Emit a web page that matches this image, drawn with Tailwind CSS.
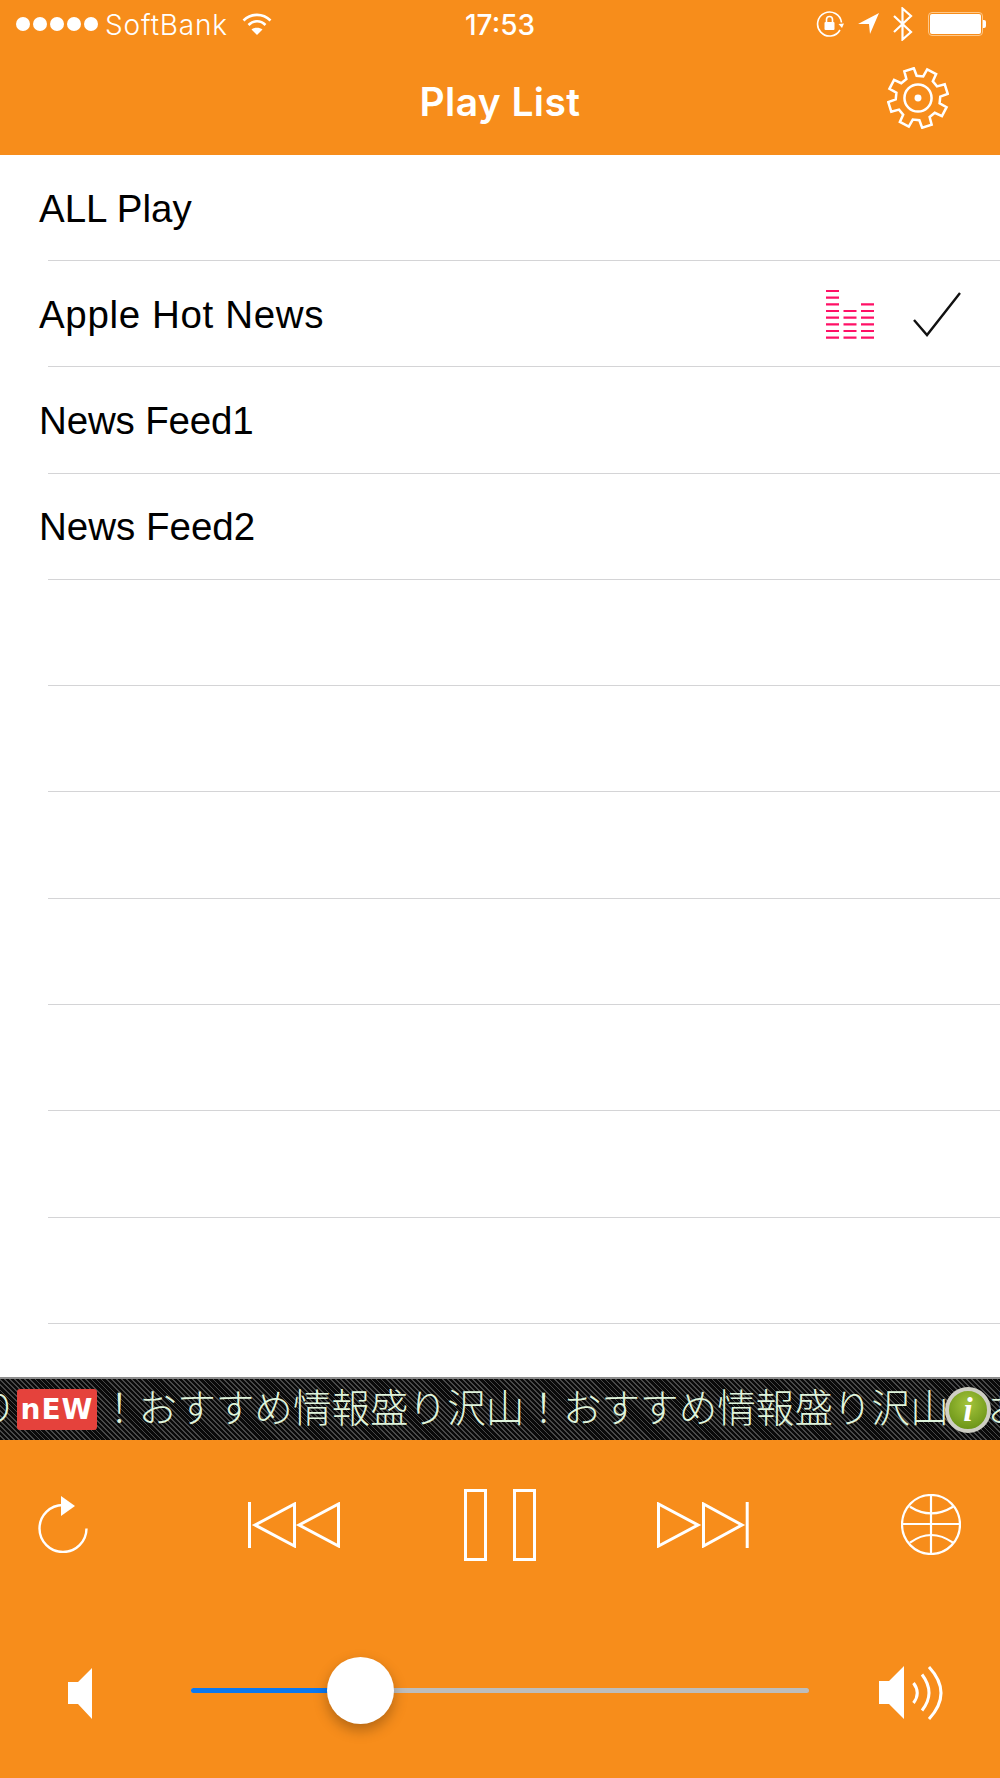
<!DOCTYPE html>
<html>
<head>
<meta charset="utf-8">
<script src="https://cdn.jsdelivr.net/npm/@tailwindcss/browser@4"></script>
</head>
<body class="bg-white">
<div class="w-[1000px] h-[1778px] flex flex-col overflow-hidden font-['Liberation_Sans','Noto_Sans_CJK_JP',sans-serif] text-black">
  <header class="bg-[#f78d1b] h-[155px] shrink-0 text-white flex flex-col">
    <div class="h-[48px] flex items-center relative">
      <div class="flex gap-[3px] ml-[16px]">
        <span class="w-[14px] h-[14px] rounded-full bg-white"></span><span class="w-[14px] h-[14px] rounded-full bg-white"></span><span class="w-[14px] h-[14px] rounded-full bg-white"></span><span class="w-[14px] h-[14px] rounded-full bg-white"></span><span class="w-[14px] h-[14px] rounded-full bg-white"></span>
      </div>
      <span class="ml-[7px] mt-[2px] text-[28px] leading-none font-['Inter'] font-light tracking-[0.8px]">SoftBank</span>
      <svg class="ml-[14px] mb-[1px]" width="30" height="24" viewBox="0 0 30 24" fill="none" stroke="white" stroke-width="2.6"><path d="M1.5 8.5C9 1 21 1 28.5 8.5"/><path d="M6.5 13C11.5 8 18.5 8 23.5 13"/><path d="M15 23L9.5 17.5C12.5 15 17.5 15 20.5 17.5Z" fill="white" stroke="none"/></svg>
      <span class="absolute left-0 right-0 mt-[2px] text-center text-[28px] leading-none font-medium font-['Inter']">17:53</span>
      <div class="ml-auto flex items-center">
        <svg width="28" height="28" viewBox="0 0 28 28" fill="none" stroke="white" stroke-width="1.6"><path d="M24 20A12 12 0 1 1 25.5 12.5"/><path d="M22.5 14L26 18L28 13.5Z" fill="white" stroke="none"/><rect x="8.5" y="12" width="10" height="8" rx="1" fill="white" stroke="none"/><path d="M10.5 12V9.5a3 3 0 0 1 6 0V12"/></svg>
        <svg class="ml-[14px]" width="22" height="22" viewBox="0 0 22 22" fill="white"><path d="M0 11L21 0L12 21L11 11Z"/></svg>
        <svg class="ml-[13px]" width="20" height="34" viewBox="0 0 20 34" fill="none" stroke="white" stroke-width="2.2"><path d="M1 9L18 25L9.5 32.5V1.5L18 9L1 25"/></svg>
        <div class="ml-[15px] w-[55px] h-[24px] rounded-[4px] border border-[#ffc98a] p-[1px]"><div class="w-full h-full bg-white rounded-[2px]"></div></div>
        <div class="w-[3px] h-[8px] mr-[14px] bg-white rounded-r-[2px]"></div>
      </div>
    </div>
    <div class="h-[107px] flex items-center relative">
      <h1 class="w-full text-center text-[39px] leading-none font-['Inter'] font-semibold tracking-[0.4px]">Play List</h1>
      <svg class="absolute left-[887px] top-[19px]" width="62" height="62" viewBox="-32 -32 64 64" fill="none" stroke="white" stroke-width="2.6" stroke-linejoin="miter">
        <path d="M-12 -19.6L-14.1 -27.6L-4.3 -30.7L-1.4 -23L5.4 -22.3L9.5 -29.5L18.7 -24.7L15.3 -17.3L19.6 -12L27.6 -14.1L30.7 -4.3L23 -1.4L22.3 5.4L29.5 9.5L24.7 18.7L17.3 15.3L12 19.6L14.1 27.6L4.3 30.7L1.4 23L-5.4 22.3L-9.5 29.5L-18.7 24.7L-15.3 17.3L-19.6 12L-27.6 14.1L-30.7 4.3L-23 1.4L-22.3 -5.4L-29.5 -9.5L-24.7 -18.7L-17.3 -15.3Z"/>
        <circle r="14"/><circle r="3.6" fill="white" stroke="none"/>
      </svg>
    </div>
  </header>

  <main class="flex-1 flex flex-col">
    <div class="h-[106px] shrink-0 pl-[39px] pt-[2px] flex items-center relative text-[38.5px] leading-none">ALL Play<span class="absolute left-[48px] right-0 bottom-0 h-px bg-[#d4d4d6]"></span></div>
    <div class="h-[106.3px] shrink-0 pl-[39px] pt-[2px] flex items-center relative text-[38.5px] leading-none tracking-[0.65px]">Apple Hot News<span class="absolute left-[48px] right-0 bottom-0 h-px bg-[#d4d4d6]"></span>
      <svg class="absolute left-[826px] top-[29px]" width="48" height="49" viewBox="0 0 48 49" stroke="#ff1166" stroke-width="2.2" fill="none">
        <path d="M0 1H13M0 7.7H13M0 14.3H13M0 21H13M0 27.7H13M0 34.3H13M0 41H13M0 47.7H13"/>
        <path d="M17.5 21H30.5M17.5 27.7H30.5M17.5 34.3H30.5M17.5 41H30.5M17.5 47.7H30.5"/>
        <path d="M35 14.3H48M35 21H48M35 27.7H48M35 34.3H48M35 41H48M35 47.7H48"/>
      </svg>
      <svg class="absolute left-[912px] top-[30px]" width="50" height="48" viewBox="0 0 50 48" fill="none" stroke="#111" stroke-width="2.4"><path d="M2 29L15 44L48 2"/></svg>
    </div>
    <div class="h-[106.3px] shrink-0 pl-[39px] pt-[2px] flex items-center relative text-[38.5px] leading-none tracking-[-0.15px]">News Feed1<span class="absolute left-[48px] right-0 bottom-0 h-px bg-[#d4d4d6]"></span></div>
    <div class="h-[106.3px] shrink-0 pl-[39px] pt-[2px] flex items-center relative text-[38.5px] leading-none">News Feed2<span class="absolute left-[48px] right-0 bottom-0 h-px bg-[#d4d4d6]"></span></div>
    <div class="h-[106.3px] shrink-0 relative"><span class="absolute left-[48px] right-0 bottom-0 h-px bg-[#d4d4d6]"></span></div>
    <div class="h-[106.3px] shrink-0 relative"><span class="absolute left-[48px] right-0 bottom-0 h-px bg-[#d4d4d6]"></span></div>
    <div class="h-[106.3px] shrink-0 relative"><span class="absolute left-[48px] right-0 bottom-0 h-px bg-[#d4d4d6]"></span></div>
    <div class="h-[106.3px] shrink-0 relative"><span class="absolute left-[48px] right-0 bottom-0 h-px bg-[#d4d4d6]"></span></div>
    <div class="h-[106.3px] shrink-0 relative"><span class="absolute left-[48px] right-0 bottom-0 h-px bg-[#d4d4d6]"></span></div>
    <div class="h-[106.3px] shrink-0 relative"><span class="absolute left-[48px] right-0 bottom-0 h-px bg-[#d4d4d6]"></span></div>
    <div class="h-[106.3px] shrink-0 relative"><span class="absolute left-[48px] right-0 bottom-0 h-px bg-[#d4d4d6]"></span></div>
  </main>

  <div class="h-[63px] shrink-0 relative overflow-hidden border-t-2 border-[#8c8c8c] bg-[repeating-linear-gradient(45deg,#0a0a0a_0px,#0a0a0a_2.4px,#484848_2.4px,#484848_3.6px)] flex items-center whitespace-nowrap text-[38.6px] leading-none text-[#e0f5dc] font-['Noto_Sans_CJK_JP',sans-serif] font-light">
    <span class="ml-[-22px] w-[39px] shrink-0 mb-[8px]">り</span>
    <span class="shrink-0 w-[80px] h-[41px] rounded-[3px] bg-[#e5423c] text-white flex items-center justify-center text-[28px] font-['DejaVu_Sans'] font-bold tracking-[1px]">nEW</span>
    <span class="shrink-0 ml-[3px] mb-[8px]">！おすすめ情報盛り沢山！おすすめ情報盛り沢山！おすすめ</span>
    <div class="absolute left-[945px] top-[8px] w-[46px] h-[46px] rounded-full bg-[radial-gradient(circle_at_50%_35%,#a4c43c,#5f8a10)] border-[4px] border-[#cfcfc4] flex items-center justify-center text-white font-['Liberation_Serif'] font-bold italic text-[34px]">i</div>
  </div>

  <div class="h-[338px] shrink-0 bg-[#f78d1b] flex flex-col">
    <div class="h-[169px] shrink-0 flex items-center pl-[38px]">
      <svg width="50" height="57" viewBox="0 0 50 57" fill="none" stroke="white" stroke-width="2.4"><path d="M48.5 32.5A23.5 23.5 0 1 1 25 9"/><path d="M23 0L37 10L23 20Z" fill="white" stroke="none"/></svg>
      <svg class="ml-[160px]" width="92" height="46" viewBox="0 0 92 46" fill="none" stroke="white" stroke-width="3"><path d="M1.5 0V46"/><path d="M7 23L46.5 2V44Z"/><path d="M51 23L90.5 2V44Z"/></svg>
      <svg class="ml-[124px]" width="72" height="72" viewBox="0 0 72 72" fill="none" stroke="white" stroke-width="3"><rect x="1.5" y="1.5" width="20" height="69"/><rect x="50.5" y="1.5" width="20" height="69"/></svg>
      <svg class="ml-[121px]" width="92" height="46" viewBox="0 0 92 46" fill="none" stroke="white" stroke-width="3"><path d="M90.2 0V46"/><path d="M1.5 2V44L41 23Z"/><path d="M46.5 2V44L85 23Z"/></svg>
      <svg class="ml-[152px]" width="60" height="61" viewBox="0 0 60 61" fill="none" stroke="white" stroke-width="2.2"><ellipse cx="30" cy="30.5" rx="29" ry="29.5"/><path d="M30 1V60M1 30H59"/><path d="M9 12.7Q30 26 52 12.7"/><path d="M9 48.7Q30 33.3 52 48.7"/></svg>
    </div>
    <div class="h-[168px] flex items-center">
      <svg class="ml-[68px] shrink-0" width="25" height="51" viewBox="0 0 25 51" fill="white"><path d="M0 14H10L24 0V51L10 36H0Z"/></svg>
      <div class="ml-[98px] mb-[5px] w-[618px] h-[5px] shrink-0 relative rounded-full bg-[#bdbdbd]">
        <div class="w-[140px] h-full rounded-l-full bg-[#0a78f0]"></div>
        <div class="absolute left-[136px] top-[-31px] w-[67px] h-[67px] rounded-full bg-white shadow-[0_6px_14px_rgba(0,0,0,0.28)]"></div>
      </div>
      <svg class="ml-[70px] shrink-0" width="66" height="54" viewBox="0 0 66 54" fill="none" stroke="white" stroke-width="3"><path d="M0 15H10L25 0V53L10 38H0Z" fill="white" stroke="none"/><path d="M34.5 17Q42 27 34.5 37"/><path d="M43 8.5Q57 27 43 44.5"/><path d="M50 1Q74 27 50 53"/></svg>
    </div>
  </div>
</div>
</body>
</html>
